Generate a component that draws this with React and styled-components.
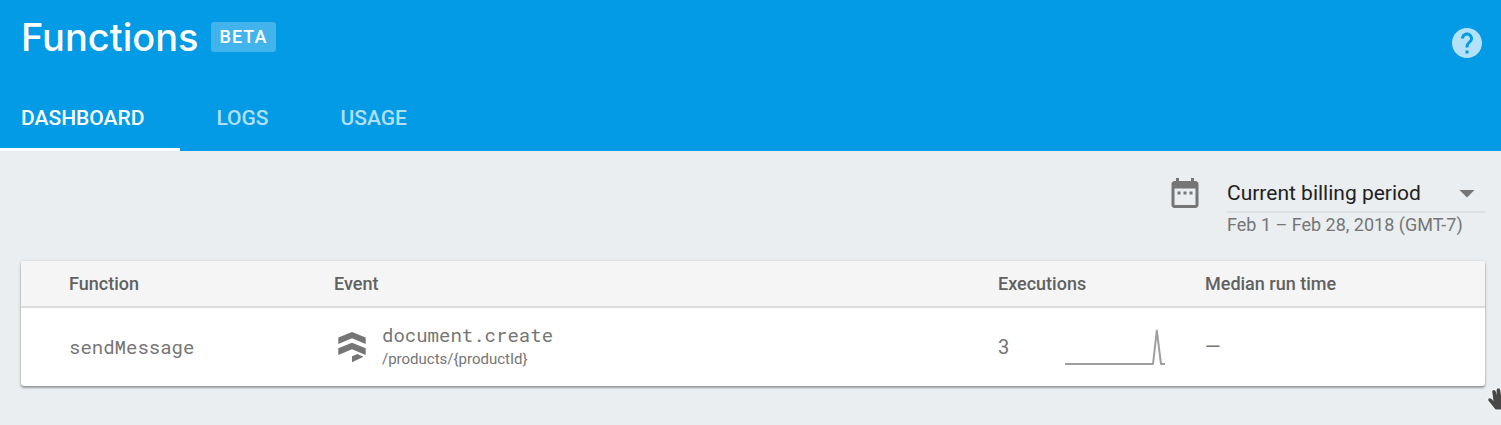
import React from "react";
import styled, { createGlobalStyle } from "styled-components";

const GlobalStyle = createGlobalStyle`
  * { box-sizing: border-box; }
  body {
    margin: 0;
    background: #eaeef1;
    color: #757575;
    font-family: Roboto, "Liberation Sans", sans-serif;
  }
`;

const Page = styled.div`
  position: relative;
  min-height: 100vh;
  overflow: hidden;
`;

const Header = styled.header`
  background: #039be5;
  color: #fff;
`;

const TitleBar = styled.div`
  display: flex;
  align-items: center;
  height: 85px;
  padding: 0 16px 0 21px;
`;

const Heading = styled.div`
  display: flex;
  align-items: center;
  gap: 12px;
  flex: 1;
  padding-bottom: 12px;
`;

const Title = styled.h1`
  margin: 0;
  font: 500 38px/48px Inter, Roboto, sans-serif;
`;

const Badge = styled.span`
  padding: 0 9px;
  border-radius: 3px;
  background: rgba(255, 255, 255, 0.25);
  font-size: 18px;
  font-weight: 500;
  line-height: 30px;
  letter-spacing: 1px;
`;

const HelpButton = styled.button`
  display: flex;
  padding: 0;
  border: 0;
  background: none;
  color: rgba(255, 255, 255, 0.7);
  cursor: pointer;
`;

const Tabs = styled.nav`
  display: flex;
`;

const Tab = styled.a`
  height: 66px;
  padding: 0 36px;
  border-bottom: 3px solid ${(p) => (p.$active ? "#fff" : "transparent")};
  color: ${(p) => (p.$active ? "#fff" : "rgba(255, 255, 255, 0.7)")};
  font-size: 21px;
  font-weight: 500;
  line-height: 66px;
  text-decoration: none;

  &:first-child { padding-left: 21px; }
`;

const Main = styled.main`
  padding: 24px 16px 36px 21px;
`;

const Period = styled.div`
  display: flex;
  justify-content: flex-end;
  gap: 24px;
  color: #757575;
`;

const PeriodField = styled.div`
  width: 258px;
`;

const SelectBox = styled.div`
  display: flex;
  position: relative;
  border-bottom: 2px solid #dfe0e1;
`;

const Select = styled.select`
  appearance: none;
  width: 100%;
  height: 36px;
  padding: 0 36px 0 0;
  border: 0;
  background: none;
  color: #212121;
  font-family: inherit;
  font-size: 21px;
`;

const SelectArrow = styled.span`
  display: flex;
  position: absolute;
  top: 0;
  right: 0;
  pointer-events: none;
`;

const Dates = styled.div`
  font-size: 18px;
  line-height: 24px;
  white-space: nowrap;
`;

const Card = styled.section`
  margin-top: 24px;
  overflow: hidden;
  border-radius: 3px;
  background: #fff;
  box-shadow: 0 1px 3px rgba(0, 0, 0, 0.3), 0 2px 2px rgba(0, 0, 0, 0.2);
`;

const Table = styled.table`
  width: 100%;
  border-collapse: separate;
  border-spacing: 0;
  table-layout: fixed;
`;

const HeadCell = styled.th`
  width: ${(p) => p.$width || "auto"};
  height: 47px;
  padding: 0;
  border-bottom: 2px solid #dcdcdc;
  background: #f5f5f5;
  color: #616161;
  font-size: 18px;
  font-weight: 500;
  text-align: left;

  &:first-child { padding-left: 48px; }
`;

const Cell = styled.td`
  height: 78px;
  padding: 0;
  font-size: 20px;

  &:first-child { padding-left: 48px; }
`;

const Code = styled.div`
  font-family: "Roboto Mono", "Liberation Mono", monospace;
  font-size: 19px;
  line-height: 24px;
`;

const EventInfo = styled.div`
  display: flex;
  align-items: center;
  gap: 12px;
`;

const Resource = styled.div`
  font-size: 15px;
  line-height: 24px;
`;

const Executions = styled.div`
  display: flex;
  align-items: center;
  justify-content: space-between;
  padding-right: 39px;
`;

const Pointer = styled.div`
  position: absolute;
  top: 386px;
  right: -12px;
  display: flex;
  pointer-events: none;
`;

const icons = {
  help: "M12 2C6.48 2 2 6.48 2 12s4.48 10 10 10 10-4.48 10-10S17.52 2 12 2zm1 17h-2v-2h2v2zm2.07-7.75l-.9.92C13.45 12.9 13 13.5 13 15h-2v-.5c0-1.1.45-2.1 1.17-2.83l1.24-1.26c.37-.36.59-.86.59-1.41 0-1.1-.9-2-2-2s-2 .9-2 2H8c0-2.21 1.79-4 4-4s4 1.79 4 4c0 .88-.36 1.68-.93 2.25z",
  calendar:
    "M9 11H7v2h2v-2zm4 0h-2v2h2v-2zm4 0h-2v2h2v-2zm2-7h-1V2h-2v2H8V2H6v2H5c-1.11 0-1.99.9-1.99 2L3 20c0 1.1.89 2 2 2h14c1.1 0 2-.9 2-2V6c0-1.1-.9-2-2-2zm0 16H5V9h14v11z",
  arrow: "M7 10l5 5 5-5z",
};

function Icon({ name }) {
  return (
    <svg width="36" height="36" viewBox="0 0 24 24" fill="currentColor" aria-hidden="true">
      <path d={icons[name]} />
    </svg>
  );
}

function FirestoreIcon() {
  return (
    <svg width="36" height="36" viewBox="0 0 36 36" fill="#757575" aria-hidden="true">
      <path d="M18 3L31.700 8.500V15L18 9.300 4.300 15V8.500zM18 13.800L31.700 19.300V26L18 20.300 4.300 26V19.300zM18 27.300L23.300 25 29.500 27.700 18 33.200z" />
    </svg>
  );
}

function Sparkline() {
  return (
    <svg width="102" height="40" viewBox="0 0 102 40" fill="none" stroke="#9e9e9e" strokeWidth="2" role="img" aria-label="Executions over time">
      <path d="M1 37H89L92.800 3.500L97 37H101" strokeLinejoin="round" />
    </svg>
  );
}

function HandCursor() {
  return (
    <svg width="26" height="26" viewBox="0 0 26 26" aria-hidden="true">
      <path
        d="M8.500 23.500L4.500 18.500 1.300 14.500Q.8 12 3 12.200 4.500 12.500 6.500 15L5.200 6Q5 4 6.800 4T9 6L9.800 9.500 9.500 4.500Q9.500 2.300 11.400 2.300T13.400 4.500V9.500L14 4.500Q14.500 3 16 3.300T17.500 6L17.500 10.500 20 8q1-1.500 2-.5t.5 2.500L21 19l-2 4.500z"
        fill="#484848"
        stroke="#fff"
        strokeWidth="1.500"
        paintOrder="stroke"
      />
    </svg>
  );
}

export default function App() {
  return (
    <>
      <GlobalStyle />
      <Page>
        <Header>
          <TitleBar>
            <Heading>
              <Title>Functions</Title>
              <Badge>BETA</Badge>
            </Heading>
            <HelpButton type="button" aria-label="Help">
              <Icon name="help" />
            </HelpButton>
          </TitleBar>
          <Tabs>
            <Tab href="#dashboard" $active aria-current="page">DASHBOARD</Tab>
            <Tab href="#logs">LOGS</Tab>
            <Tab href="#usage">USAGE</Tab>
          </Tabs>
        </Header>
        <Main>
          <Period>
            <Icon name="calendar" />
            <PeriodField>
              <SelectBox>
                <Select aria-label="Time period">
                  <option>Current billing period</option>
                </Select>
                <SelectArrow>
                  <Icon name="arrow" />
                </SelectArrow>
              </SelectBox>
              <Dates>Feb 1 – Feb 28, 2018 (GMT-7)</Dates>
            </PeriodField>
          </Period>
          <Card>
            <Table>
              <thead>
                <tr>
                  <HeadCell $width="313px">Function</HeadCell>
                  <HeadCell>Event</HeadCell>
                  <HeadCell $width="207px">Executions</HeadCell>
                  <HeadCell $width="280px">Median run time</HeadCell>
                </tr>
              </thead>
              <tbody>
                <tr>
                  <Cell><Code>sendMessage</Code></Cell>
                  <Cell>
                    <EventInfo>
                      <FirestoreIcon />
                      <div>
                        <Code>document.create</Code>
                        <Resource>/products/&#123;productId&#125;</Resource>
                      </div>
                    </EventInfo>
                  </Cell>
                  <Cell>
                    <Executions>
                      3
                      <Sparkline />
                    </Executions>
                  </Cell>
                  <Cell>—</Cell>
                </tr>
              </tbody>
            </Table>
          </Card>
        </Main>
        <Pointer><HandCursor /></Pointer>
      </Page>
    </>
  );
}
